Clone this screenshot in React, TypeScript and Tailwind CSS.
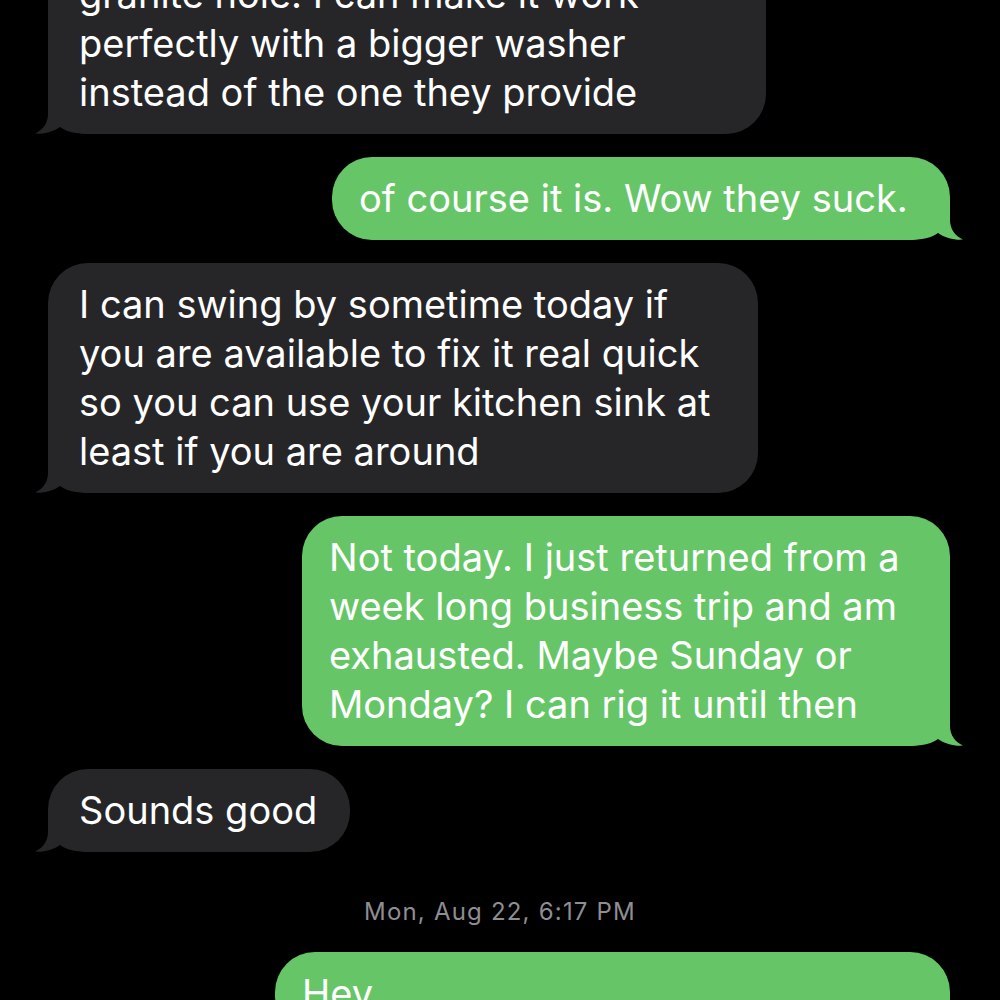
import React from "react";

type Msg =
  | { kind: "in" | "out"; lines: string[]; width: number; className?: string }
  | { kind: "stamp"; text: string };

const messages: Msg[] = [
  {
    kind: "in",
    lines: [
      "granite hole. I can make it work",
      "perfectly with a bigger washer",
      "instead of the one they provide",
    ],
    width: 718,
    className: "-mt-[47px]",
  },
  { kind: "out", lines: ["of course it is. Wow they suck."], width: 618, className: "mt-[23px]" },
  {
    kind: "in",
    lines: [
      "I can swing by sometime today if",
      "you are available to fix it real quick",
      "so you can use your kitchen sink at",
      "least if you are around",
    ],
    width: 710,
    className: "mt-[23px]",
  },
  {
    kind: "out",
    lines: [
      "Not today. I just returned from a",
      "week long business trip and am",
      "exhausted. Maybe Sunday or",
      "Monday? I can rig it until then",
    ],
    width: 648,
    className: "mt-[23px]",
  },
  { kind: "in", lines: ["Sounds good"], width: 302, className: "mt-[23px]" },
  { kind: "stamp", text: "Mon, Aug 22, 6:17 PM" },
  { kind: "out", lines: ["Hey"], width: 675, className: "mt-[27px]" },
];

function Tail({ color, flip }: { color: string; flip?: boolean }) {
  return (
    <svg
      width="60"
      height="40"
      viewBox="0 0 60 40"
      className={`absolute bottom-0 ${flip ? "-right-[14px] -scale-x-100" : "-left-[14px]"}`}
    >
      <path
        d="M14 0 L14 20 C14 29 9 36 1 39.6 C9 40.4 19 38 26 33 C32 37.5 41 40 58 40 L58 0 Z"
        fill={color}
      />
    </svg>
  );
}

function Bubble({ m }: { m: Extract<Msg, { kind: "in" | "out" }> }) {
  const out = m.kind === "out";
  const color = out ? "#66c667" : "#262629";
  return (
    <div className={`flex ${out ? "justify-end pr-[50px]" : "justify-start pl-[48px]"} ${m.className ?? ""}`}>
      <div
        className={`relative rounded-[40px] py-[17px] ${out ? "bg-[#66c667] pl-[27px]" : "bg-[#262629] pl-[31px]"}`}
        style={{ width: m.width }}
      >
        <Tail color={color} flip={out} />
        <div className="relative text-white text-[38px] leading-[49px]">
          {m.lines.map((l, i) => (
            <div key={i} className="whitespace-nowrap">
              {l}
            </div>
          ))}
        </div>
      </div>
    </div>
  );
}

export default function App() {
  return (
    <div
      className="w-[1000px] h-[1000px] overflow-hidden bg-black"
      style={{ fontFamily: "Inter, 'Liberation Sans', sans-serif" }}
    >
      {messages.map((m, i) =>
        m.kind === "stamp" ? (
          <div
            key={i}
            className="mt-[47px] text-center text-[24px] leading-[26px] tracking-[1.2px] text-[#8e8e93]"
          >
            {m.text}
          </div>
        ) : (
          <Bubble key={i} m={m} />
        )
      )}
    </div>
  );
}
